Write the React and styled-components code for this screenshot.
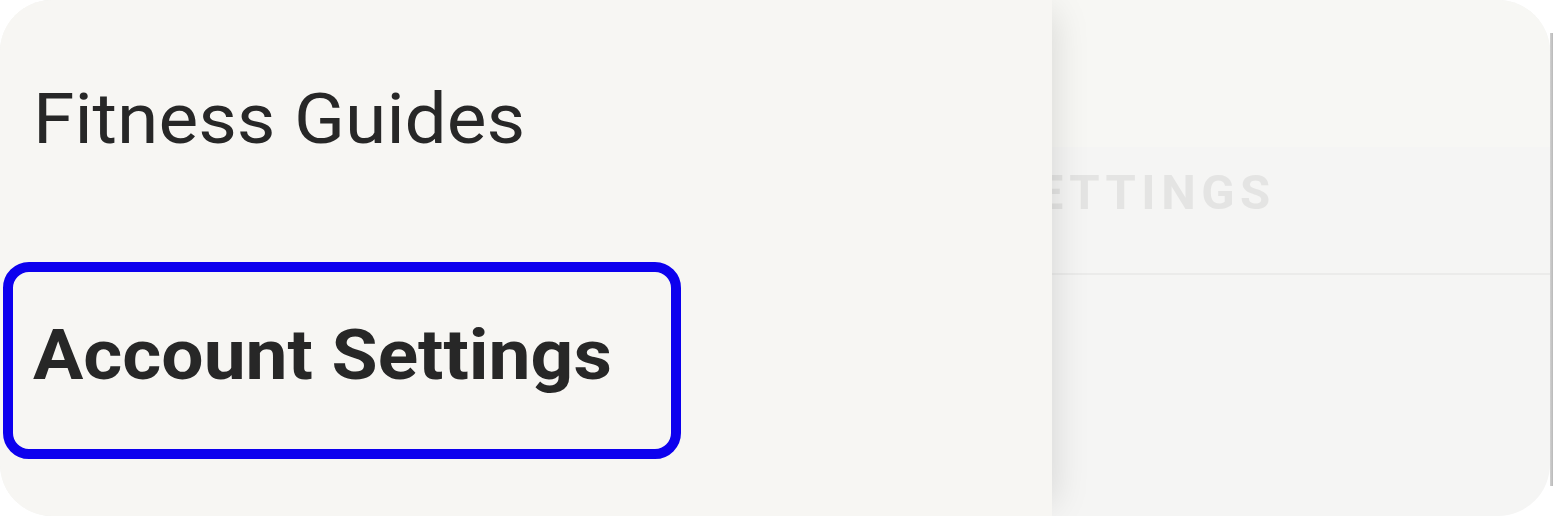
import React from 'react';
import styled, { createGlobalStyle } from 'styled-components';

const GlobalStyle = createGlobalStyle`
  html, body {
    margin: 0;
    padding: 0;
    background: #ffffff;
  }
  body {
    font-family: Roboto, "Liberation Sans", Arial, sans-serif;
  }
`;

const Card = styled.div`
  position: relative;
  width: 1550px;
  height: 516px;
  border-radius: 52px;
  overflow: hidden;
  background: #f5f5f4;
`;

/* thin edge on the right of the card, stops short of the corners */
const Frame = styled.div`
  position: relative;
  width: 1553px;
  height: 516px;

  &::after {
    content: '';
    position: absolute;
    top: 33px;
    bottom: 30px;
    right: 0;
    width: 3px;
    background: linear-gradient(90deg, #d2d2d2, #b9b9b9);
  }
`;

/* settings page behind the drawer */
const Page = styled.div`
  display: flex;
  flex-direction: column;
  height: 100%;
`;

const TopBar = styled.div`
  height: 147px;
  background: #f7f7f4;
`;

const TitleBar = styled.div`
  height: 126px;
  display: flex;
  align-items: flex-start;
  padding-left: 1000px;
  border-bottom: 2px solid #ebebea;
`;

const PageTitle = styled.h1`
  margin: 0;
  padding-top: 21px;
  font-size: 49px;
  line-height: 1;
  font-weight: 700;
  letter-spacing: 5.5px;
  color: #e4e4e3;
`;

const Drawer = styled.nav`
  position: absolute;
  top: 0;
  left: 0;
  bottom: 0;
  width: 1052px;
  background: #f7f6f3;
  box-shadow: 14px 0 34px -12px rgba(0, 0, 0, 0.13);
`;

const MenuList = styled.ul`
  list-style: none;
  margin: 0;
  padding: 26px 0 0 3px;
  display: flex;
  flex-direction: column;
  gap: 39px;
`;

const MenuItem = styled.li`
  box-sizing: border-box;
  width: 678px;
  height: 197px;
  padding: 48px 20px 0;
  border: 10px solid ${(p) => (p.$focused ? '#0d00ee' : 'transparent')};
  border-radius: 26px;
  font-size: 70px;
  font-weight: ${(p) => (p.$focused ? 700 : 400)};
  line-height: 1;
  color: #272727;
  white-space: nowrap;
`;

const Label = styled.span`
  display: inline-block;
  transform: scaleX(1.07);
  transform-origin: left center;
`;

export default function App() {
  return (
    <>
      <GlobalStyle />
      <Frame>
        <Card>
          <Page>
            <TopBar />
            <TitleBar>
              <PageTitle>SETTINGS</PageTitle>
            </TitleBar>
          </Page>
          <Drawer>
            <MenuList>
              <MenuItem>
                <Label>Fitness Guides</Label>
              </MenuItem>
              <MenuItem $focused>
                <Label>Account Settings</Label>
              </MenuItem>
            </MenuList>
          </Drawer>
        </Card>
      </Frame>
    </>
  );
}
